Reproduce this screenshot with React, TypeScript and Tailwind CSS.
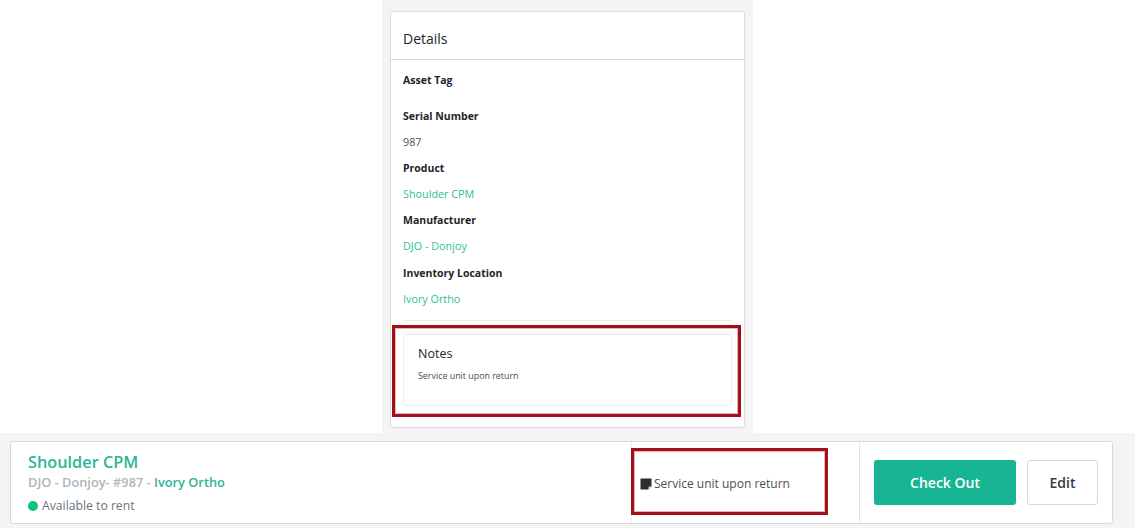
import { ReactNode } from "react";

function Field({ label, children }: { label: string; children?: ReactNode }) {
  return (
    <div>
      <div className="h-[26px] text-[10.5px] leading-[26px] font-bold text-[#212529]">{label}</div>
      <div className="h-[26.2px] text-[10.8px] leading-[26px] text-[#495057]">{children}</div>
    </div>
  );
}

function TealLink({ children }: { children: ReactNode }) {
  return <span className="text-[#2ebd9b]">{children}</span>;
}

export default function App() {
  return (
    <div className="relative h-[528px] w-[1135px] overflow-hidden bg-white font-['Open_Sans','Noto_Sans',sans-serif]">
      {/* Details column */}
      <div className="ml-[382px] h-[433px] w-[371px] bg-[#f4f4f4] px-2 pt-[11px]">
        <div className="h-[417px] w-[355px] rounded-[3px] border border-[#dcdcdc] bg-white">
          <div className="flex h-[48px] items-center border-b border-[#d8d8d8] px-3 pt-[6px] text-[14px] font-medium text-[#212529]">
            Details
          </div>
          <div className="px-3">
            <div className="mt-[7px]">
              <div className="h-[36px] text-[10.5px] leading-[26px] font-bold text-[#212529]">Asset Tag</div>
              <Field label="Serial Number">987</Field>
              <Field label="Product">
                <TealLink>Shoulder CPM</TealLink>
              </Field>
              <Field label="Manufacturer">
                <TealLink>DJO - Donjoy</TealLink>
              </Field>
              <Field label="Inventory Location">
                <TealLink>Ivory Ortho</TealLink>
              </Field>
            </div>
            <div className="mt-[8px] border-t border-[#ececec]" />
            <div className="mt-[13px] h-[72px] rounded-[3px] border border-[#ececec] px-[14px] pt-[10px]">
              <div className="text-[12.5px] leading-[18px] font-medium text-[#212529]">Notes</div>
              <div className="mt-[6px] text-[8.9px] leading-[14px] text-[#495057]">Service unit upon return</div>
            </div>
          </div>
        </div>
      </div>

      {/* Asset bar */}
      <div className="h-[95px] bg-[#f4f4f4] pt-[8px] pl-[10px]">
        <div className="flex h-[83px] w-[1103px] rounded-[3px] border border-[#d8d8d8] bg-white">
          <div className="w-[620px] pt-[9px] pl-[17px]">
            <div className="text-[16.3px] leading-[22px] font-semibold text-[#2cb595]">Shoulder CPM</div>
            <div className="mt-[1px] text-[12.8px] leading-[17px] font-semibold text-[#adb5bd]">
              DJO - Donjoy- #987 - <span className="text-[#2cb595]">Ivory Ortho</span>
            </div>
            <div className="mt-[6px] flex items-center gap-[4px] text-[12.2px] leading-[17px] text-[#6c757d]">
              <span className="h-[10px] w-[10px] rounded-full bg-[#10c27c]" />
              Available to rent
            </div>
          </div>
          <div className="flex w-[228px] items-center gap-[2px] border-l border-[#ececec] pt-[2px] pl-[8px] text-[12px] text-[#495057]">
            <svg width="12" height="12" viewBox="0 0 12 12" className="shrink-0">
              <path d="M0.5 0.5h11v8l-3 3h-8z" fill="#2b2e33" />
              <path d="M9 11.5V9h2.5" fill="none" stroke="#fff" strokeWidth="1" />
            </svg>
            Service unit upon return
          </div>
          <div className="flex flex-1 items-center gap-[11px] border-l border-[#e4e4e4] pl-[14px]">
            <button className="h-[45px] w-[142px] rounded-[3px] bg-[#18b594] text-[14px] font-semibold text-white">
              Check Out
            </button>
            <button className="h-[45px] w-[71px] rounded-[3px] border border-[#d8d8d8] bg-white text-[14px] font-semibold text-[#343a40]">
              Edit
            </button>
          </div>
        </div>
      </div>

      {/* Red annotation boxes */}
      <div className="absolute top-[325px] left-[392px] h-[92px] w-[349px] border-[3px] border-[#a20f1b] shadow-[inset_0_0_0_1px_#e2b3b7]" />
      <div className="absolute top-[448px] left-[631px] h-[67px] w-[197px] border-[3px] border-[#a20f1b] shadow-[inset_0_0_0_1px_#e2b3b7]" />
    </div>
  );
}
